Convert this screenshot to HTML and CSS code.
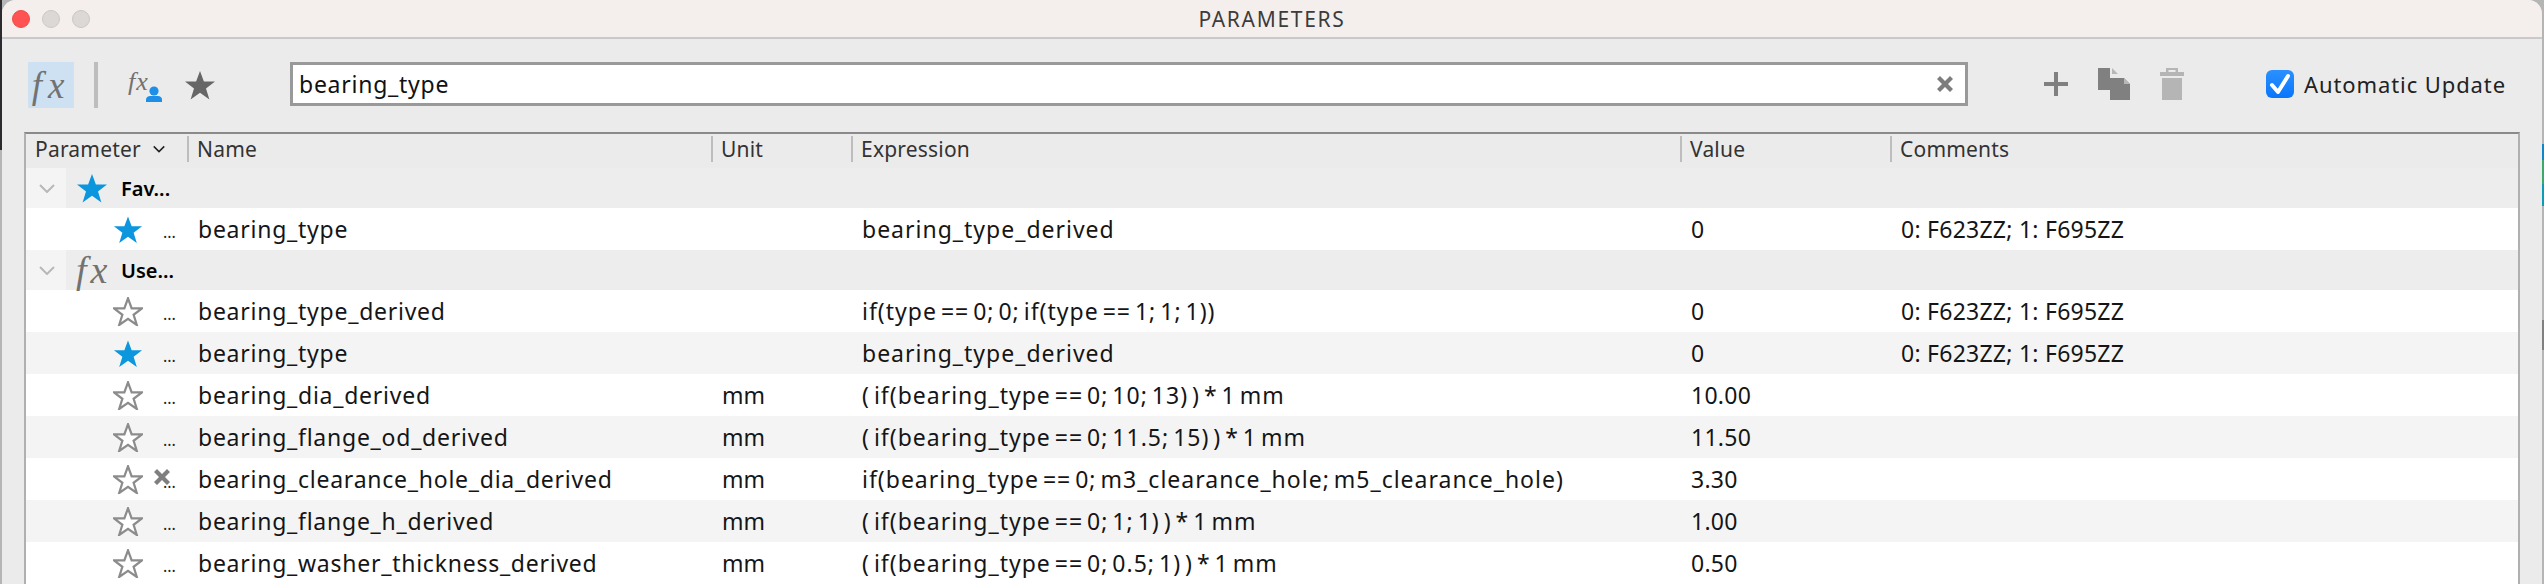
FILE: index.html
```html
<!DOCTYPE html>
<html lang="en">
<head>
<meta charset="utf-8">
<title>Parameters</title>
<link rel="stylesheet" href="styles.css">
</head>
<body>
<svg class="defs" width="0" height="0" aria-hidden="true">
  <symbol id="star" viewBox="0 0 32 30"><path d="M16 1l3.900 10.600H31l-9 6.900 3.400 10.900L16 22.800 6.600 29.400 10 18.500l-9-6.900h11.100z"/></symbol>
  <symbol id="cross" viewBox="0 0 16 16"><path d="M0 3l3-3 5 5 5-5 3 3-5 5 5 5-3 3-5-5-5 5-3-3 5-5z"/></symbol>
  <symbol id="chev" viewBox="0 0 16 9"><path d="M1 1l7 7 7-7" fill="none" stroke="currentColor" stroke-width="2"/></symbol>
</svg>
<div class="window">
  <header class="titlebar">
    <div class="lights"><span class="light red"></span><span class="light"></span><span class="light"></span></div>
    <div class="title">PARAMETERS</div>
  </header>
  <div class="toolbar">
    <div class="filter active"><span class="fx big">fx</span></div>
    <div class="tsep"></div>
    <div class="filter usr">
      <span class="fx small">fx</span>
      <svg class="person" viewBox="0 0 16 16"><circle cx="8" cy="5" r="4.600"/><path d="M0 16v-2.500c0-2 2-3.500 4-3.500h8c2 0 4 1.500 4 3.500V16z"/></svg>
    </div>
    <svg class="tstar"><use href="#star"/></svg>
    <div class="search">
      <span class="search-text">bearing_type</span>
      <svg class="clear"><use href="#cross"/></svg>
    </div>
    <div class="actions">
      <svg class="act plus" viewBox="0 0 24 24"><path d="M10 0h4v10h10v4H14v10h-4V14H0v-4h10z"/></svg>
      <svg class="act copy" viewBox="0 0 32 32"><path d="M0 0h12v22H0zM12 10h14l6 6v16H12z" fill="#808080"/><path d="M14 0l6 6h-6zM26 10l6 6h-6z" fill="#b8b8b8"/></svg>
      <svg class="act trash" viewBox="0 0 24 32"><path d="M6 0h12v4h6v4H0V4h6zM8.500 2v2h7V2zM2 10h20v22H2z"/></svg>
    </div>
    <label class="auto">
      <span class="check"><svg viewBox="0 0 28 28"><path d="M6 15l6 7L22 6" fill="none" stroke="#fff" stroke-width="4" stroke-linecap="round" stroke-linejoin="round"/></svg></span>
      <span>Automatic Update</span>
    </label>
  </div>
  <div class="table">
    <div class="row head">
      <div class="cell param">Parameter <svg class="sort"><use href="#chev"/></svg></div>
      <div class="cell">Name</div><div class="cell">Unit</div><div class="cell">Expression</div><div class="cell">Value</div><div class="cell">Comments</div>
    </div>
    <div class="row group">
      <div class="gcell"><span class="gtoggle"><svg class="chev"><use href="#chev"/></svg></span><svg class="gicon blue"><use href="#star"/></svg><span class="gname">Fav...</span></div>
    </div>
    <div class="row">
      <div class="cell pcell"><svg class="rstar blue"><use href="#star"/></svg><span class="dots">...</span></div>
      <div class="cell">bearing_type</div><div class="cell"></div><div class="cell">bearing_type_derived</div><div class="cell">0</div><div class="cell">0: F623ZZ; 1: F695ZZ</div>
    </div>
    <div class="row group">
      <div class="gcell"><span class="gtoggle"><svg class="chev"><use href="#chev"/></svg></span><span class="fx gfx">fx</span><span class="gname">Use...</span></div>
    </div>
    <div class="row">
      <div class="cell pcell"><svg class="rstar hollow"><use href="#star"/></svg><span class="dots">...</span></div>
      <div class="cell">bearing_type_derived</div><div class="cell"></div><div class="cell">if(type == 0; 0; if(type == 1; 1; 1))</div><div class="cell">0</div><div class="cell">0: F623ZZ; 1: F695ZZ</div>
    </div>
    <div class="row alt">
      <div class="cell pcell"><svg class="rstar blue"><use href="#star"/></svg><span class="dots">...</span></div>
      <div class="cell">bearing_type</div><div class="cell"></div><div class="cell">bearing_type_derived</div><div class="cell">0</div><div class="cell">0: F623ZZ; 1: F695ZZ</div>
    </div>
    <div class="row">
      <div class="cell pcell"><svg class="rstar hollow"><use href="#star"/></svg><span class="dots">...</span></div>
      <div class="cell">bearing_dia_derived</div><div class="cell">mm</div><div class="cell">( if(bearing_type == 0; 10; 13) ) * 1 mm</div><div class="cell">10.00</div><div class="cell"></div>
    </div>
    <div class="row alt">
      <div class="cell pcell"><svg class="rstar hollow"><use href="#star"/></svg><span class="dots">...</span></div>
      <div class="cell">bearing_flange_od_derived</div><div class="cell">mm</div><div class="cell">( if(bearing_type == 0; 11.5; 15) ) * 1 mm</div><div class="cell">11.50</div><div class="cell"></div>
    </div>
    <div class="row">
      <div class="cell pcell"><svg class="rstar hollow"><use href="#star"/></svg><span class="dots">...</span><svg class="rowx"><use href="#cross"/></svg></div>
      <div class="cell">bearing_clearance_hole_dia_derived</div><div class="cell">mm</div><div class="cell">if(bearing_type == 0; m3_clearance_hole; m5_clearance_hole)</div><div class="cell">3.30</div><div class="cell"></div>
    </div>
    <div class="row alt">
      <div class="cell pcell"><svg class="rstar hollow"><use href="#star"/></svg><span class="dots">...</span></div>
      <div class="cell">bearing_flange_h_derived</div><div class="cell">mm</div><div class="cell">( if(bearing_type == 0; 1; 1) ) * 1 mm</div><div class="cell">1.00</div><div class="cell"></div>
    </div>
    <div class="row">
      <div class="cell pcell"><svg class="rstar hollow"><use href="#star"/></svg><span class="dots">...</span></div>
      <div class="cell">bearing_washer_thickness_derived</div><div class="cell">mm</div><div class="cell">( if(bearing_type == 0; 0.5; 1) ) * 1 mm</div><div class="cell">0.50</div><div class="cell"></div>
    </div>
  </div>
</div>
</body>
</html>
```
FILE: styles.css
```css
* { box-sizing: border-box; }
html { background: #b5b5b5; }
html, body { margin: 0; height: 584px; overflow: hidden; }
body {
  font-family: "Noto Sans", sans-serif; font-size: 23px; color: #151515; letter-spacing: .75px;
  background:
    linear-gradient(#2c2c2e 0 150px, #b5b5b5 150px) left top / 2px 100% no-repeat,
    linear-gradient(#b5b5b5 0 144px, #0f86c8 144px 160px, #3aa96a 160px 184px, #0d9cb5 184px 206px, #b5b5b5 206px 320px, #808080 320px 350px, #b5b5b5 350px) right top / 2px 100% no-repeat;
}
.defs { position: absolute; }
.window { margin: 0 2px; height: 584px; background: #ebebeb; border-radius: 14px 14px 0 0; overflow: hidden; }
.titlebar { height: 39px; background: #f4efed; border-bottom: 2px solid #c9c9c9; display: flex; align-items: center; position: relative; }
.lights { display: flex; gap: 12px; padding-left: 10px; }
.light { width: 18px; height: 18px; border-radius: 50%; background: #dcd8d5; border: 1px solid #cbc7c4; }
.light.red { background: #fe5352; border-color: #ee4a48; }
.title { position: absolute; left: 0; right: 0; text-align: center; font-size: 21px; color: #3c3c3c; letter-spacing: 1.700px; }
.toolbar { height: 93px; display: flex; align-items: flex-start; padding: 23px 0 0 26px; }
.filter { width: 46px; height: 46px; position: relative; display: flex; align-items: center; justify-content: center; }
.filter.active { background: #cde1f3; }
.fx { font-family: "Liberation Serif", serif; font-style: italic; color: #727272; }
.fx.big { font-size: 37px; line-height: 1; letter-spacing: 6px; }
.tsep { width: 4px; height: 46px; background: #bdbdbd; margin: 0 28px 0 20px; }
.filter.usr { width: 36px; margin-right: 22px; }
.fx.small { font-size: 26px; line-height: 1; margin: -7px 11px 0 0; letter-spacing: 1px; }
.person { position: absolute; right: 0; bottom: 6px; width: 16px; height: 16px; fill: #1d8fe6; }
.tstar { width: 32px; height: 32px; margin-top: 7px; fill: #666; }
.search { width: 1678px; height: 44px; margin-left: 74px; border: 3px solid #999; background: #fff; display: flex; align-items: center; justify-content: space-between; padding: 0 12px 0 6px; color: #111; }
.clear { width: 16px; height: 16px; fill: #7d7d7d; }
.actions { display: flex; align-items: flex-start; margin-left: 76px; }
.act { display: block; }
.plus { width: 24px; height: 24px; fill: #808080; margin-top: 10px; }
.copy { width: 32px; height: 32px; margin: 6px 0 0 30px; }
.trash { width: 24px; height: 32px; margin: 6px 0 0 30px; fill: #b5b5b5; }
.auto { display: flex; align-items: center; gap: 10px; margin: 7px 0 0 82px; font-size: 22px; color: #222; letter-spacing: .9px; }
.check { width: 28px; height: 28px; border-radius: 6px; background: linear-gradient(#2b90ff, #0a76fb); display: block; }
.check svg { display: block; }
.table { margin: 0 22px; border-top: 2px solid #8a8a8a; border-left: 2px solid #b0b0b0; border-right: 2px solid #b0b0b0; background: #fff; }
.row { display: grid; grid-template-columns: 161px 524px 140px 829px 210px 1fr; height: 42px; align-items: center; background: #fff; padding-bottom: 2px; }
.row.alt { background: #f4f4f4; }
.row > .cell:nth-child(3) { letter-spacing: 0; }
.row > .cell:nth-child(4) { letter-spacing: 1px; word-spacing: -3px; }
.row > .cell:nth-child(n+5) { letter-spacing: .25px; }
.row.head { height: 34px; padding-bottom: 4px; background: #ebebeb; font-size: 21px; color: #333; }
.row.head > .cell { border-left: 2px solid #bdbdbd; padding-left: 8px; height: 26px; line-height: 26px; letter-spacing: .2px; }
.row.head > .param { border-left: 0; padding-left: 9px; display: flex; align-items: center; gap: 12px; }
.sort { width: 12px; height: 8px; color: #222; }
.cell { padding-left: 11px; white-space: nowrap; }
.row.group { height: 40px; background: #ededed; padding-bottom: 0; }
.gcell { grid-column: 1 / -1; display: flex; align-items: center; height: 40px; position: relative; }
.gtoggle { width: 40px; height: 40px; background: #f4f4f4; display: flex; align-items: center; padding-left: 13px; margin-right: 10px; }
.chev { width: 16px; height: 9px; color: #b8b8b8; }
.gicon { width: 32px; height: 30px; }
.blue { fill: #0b96dd; }
.gname { font-size: 20px; font-weight: 600; color: #000; margin-left: 13px; letter-spacing: 0; }
.gfx { font-size: 38px; line-height: 1; width: 32px; letter-spacing: 4px; }
.pcell { position: relative; padding-left: 87px; display: flex; align-items: center; height: 42px; }
.rstar { width: 30px; height: 29px; flex: none; }
.hollow { fill: #fff; stroke: #8c8c8c; stroke-width: 2.400; }
.dots { margin-left: 20px; font-size: 16px; color: #222; line-height: 1; padding-top: 6px; letter-spacing: 0; }
.rowx { position: absolute; left: 128px; top: 11px; width: 16px; height: 16px; fill: #7f7f7f; }
```
